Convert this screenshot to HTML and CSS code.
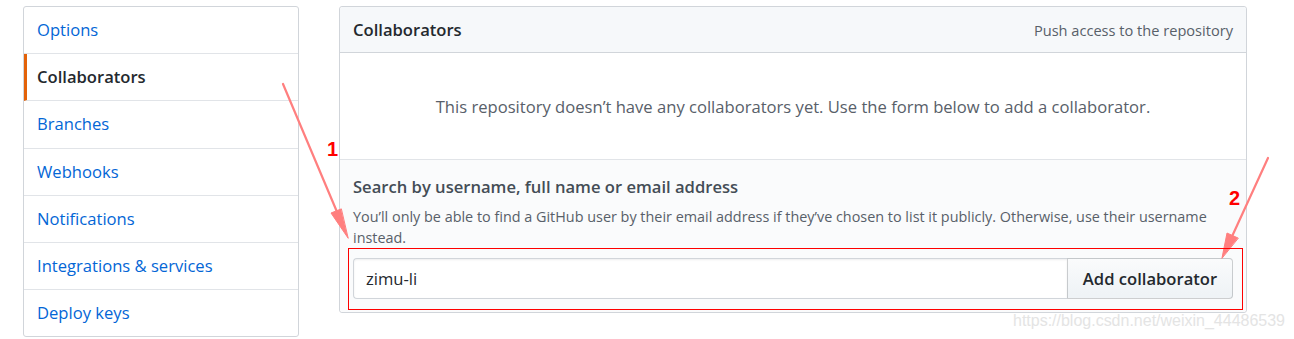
FILE: index.html
```html
<!DOCTYPE html>
<html lang="en">
<head>
    <meta charset="UTF-8">
    <title>Collaborators</title>
    <link rel="stylesheet" href="styles.css">
</head>
<body>
    <div class="page">
        <nav class="menu">
            <a class="menu-item" href="#">Options</a>
            <a class="menu-item selected" href="#">Collaborators</a>
            <a class="menu-item" href="#">Branches</a>
            <a class="menu-item" href="#">Webhooks</a>
            <a class="menu-item" href="#">Notifications</a>
            <a class="menu-item" href="#">Integrations &amp; services</a>
            <a class="menu-item" href="#">Deploy keys</a>
        </nav>

        <div class="box">
            <div class="box-header">
                <h3 class="box-title">Collaborators</h3>
                <span class="box-note">Push access to the repository</span>
            </div>
            <div class="box-blank">
                This repository doesn’t have any collaborators yet. Use the form below to add a collaborator.
            </div>
            <div class="box-footer">
                <label class="search-label" for="search-member">Search by username, full name or email address</label>
                <p class="search-note">You’ll only be able to find a GitHub user by their email address if they’ve chosen to list it publicly. Otherwise, use their username instead.</p>
                <div class="input-group">
                    <input type="text" id="search-member" class="form-control" value="zimu-li">
                    <button class="btn" type="button">Add collaborator</button>
                </div>
            </div>
        </div>
    </div>

    <!-- screenshot annotations -->
    <svg class="marks" width="1294" height="339" viewBox="0 0 1294 339">
        <g stroke="#ff7f7f" stroke-width="2.2" fill="#ff7f7f" stroke-linecap="round">
            <line x1="283" y1="84" x2="340" y2="219"/>
            <polygon points="348,238 331,213 341,209" stroke-width="1"/>
            <line x1="1268" y1="158" x2="1229" y2="243"/>
            <polygon points="1222,258 1227,233 1238,238" stroke-width="1"/>
        </g>
        <rect x="348.5" y="248.5" width="894" height="61" fill="none" stroke="#ff0000" stroke-width="1"/>
        <text x="327" y="156" class="mark-num">1</text>
        <text x="1229" y="205" class="mark-num">2</text>
        <text x="1013" y="326" class="watermark" textLength="272">https://blog.csdn.net/weixin_44486539</text>
    </svg>
</body>
</html>
```

FILE: styles.css
```css
:root {
    --text-color: #24292e;
    --muted-color: #586069;
    --link-color: #0366d6;
    --border-color: #d1d5da;
    --line-color: #e1e4e8;
}

body {
    margin: 0;
    font-family: 'Open Sans', 'Noto Sans', sans-serif;
    color: var(--text-color);
    background: #fff;
}

.page {
    display: flex;
    align-items: flex-start;
    gap: 40px;
    padding: 6px 0 0 23px;
}

/* side menu */
.menu {
    width: 274px;
    display: flex;
    flex-direction: column;
    border: 1px solid var(--border-color);
    border-radius: 3px;
}

.menu-item {
    display: block;
    padding: 12px 13px;
    line-height: 22.2px;
    font-size: 16.6px;
    color: var(--link-color);
    text-decoration: none;
    border-bottom: 1px solid var(--line-color);
}

.menu-item:last-child {
    border-bottom: 0;
}

.menu-item.selected {
    color: var(--text-color);
    font-weight: 600;
    border-left: 3px solid #e36209;
    padding-left: 10px;
}

/* main box */
.box {
    width: 906px;
    border: 1px solid var(--border-color);
    border-radius: 3px;
}

.box-header {
    display: flex;
    align-items: center;
    justify-content: space-between;
    height: 45px;
    padding: 0 13px;
    background: #f6f8fa;
    border-bottom: 1px solid var(--border-color);
    border-radius: 3px 3px 0 0;
}

.box-title {
    margin: 0;
    font-size: 16.6px;
    font-weight: 600;
}

.box-note {
    font-size: 14.6px;
    color: var(--muted-color);
}

.box-blank {
    height: 106px;
    display: flex;
    align-items: center;
    justify-content: center;
    font-size: 16.6px;
    color: var(--muted-color);
    border-bottom: 1px solid var(--line-color);
}

.box-footer {
    padding: 16px 13px 13px;
    background: #fafbfc;
    border-radius: 0 0 3px 3px;
}

.search-label {
    display: block;
    font-size: 16.6px;
    line-height: 22px;
    font-weight: 600;
    color: #444d56;
}

.search-note {
    margin: 8px 0 10px;
    font-size: 14.4px;
    line-height: 21px;
    color: var(--muted-color);
}

.input-group {
    display: flex;
    height: 41px;
}

.form-control {
    flex: 1;
    margin: 0;
    padding: 0 12px;
    font-family: inherit;
    font-size: 16.6px;
    color: var(--text-color);
    background: #fff;
    border: 1px solid var(--border-color);
    border-right: 0;
    border-radius: 4px 0 0 4px;
    box-shadow: inset 0 1px 2px rgba(27, 31, 35, 0.075);
    outline: none;
}

.btn {
    width: 166px;
    margin: 0;
    padding: 0;
    white-space: nowrap;
    font-family: inherit;
    font-size: 16.6px;
    font-weight: 600;
    color: var(--text-color);
    background-image: linear-gradient(-180deg, #fafbfc 0%, #eff3f6 90%);
    border: 1px solid rgba(27, 31, 35, 0.2);
    border-radius: 0 4px 4px 0;
}

/* annotations over the screenshot */
.marks {
    position: absolute;
    top: 0;
    left: 0;
    pointer-events: none;
}

.mark-num {
    font-family: 'Liberation Sans', Arial, sans-serif;
    font-weight: bold;
    font-size: 20px;
    fill: #ff0000;
}

.watermark {
    font-family: 'Liberation Sans', Arial, sans-serif;
    font-size: 16px;
    fill: #e4e4e4;
}
```
